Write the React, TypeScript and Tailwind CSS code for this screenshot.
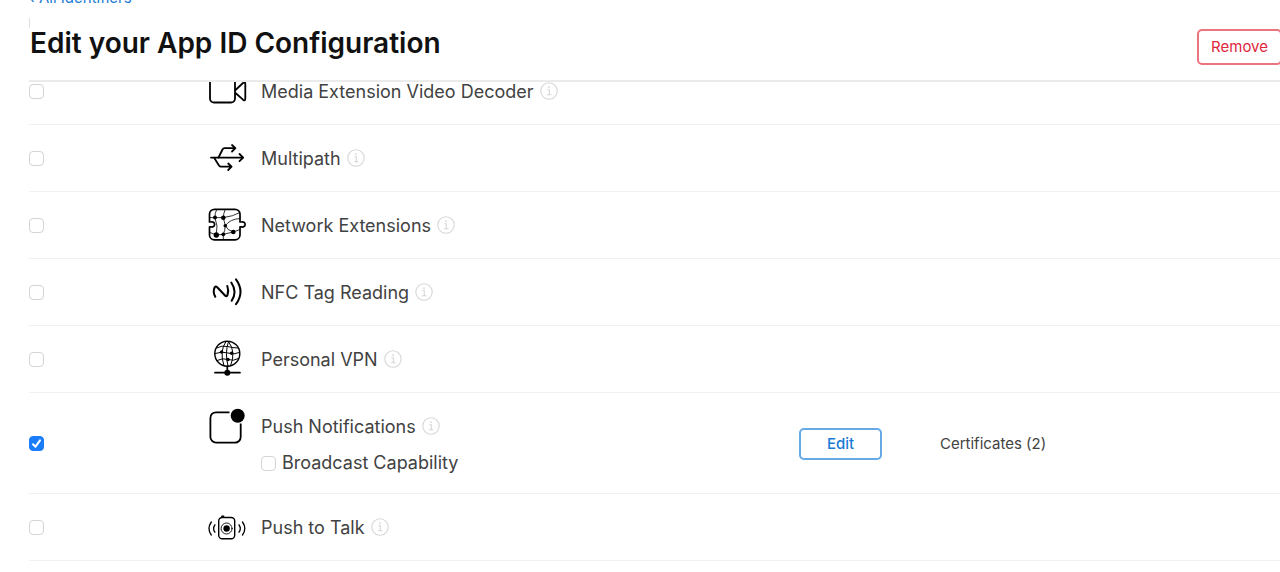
import { useState } from "react";
import type { ReactNode } from "react";

function Icon({ children }: { children: ReactNode }) {
  return (
    <svg
      viewBox="0 0 40 40"
      className="size-10 shrink-0 text-black"
      fill="none"
      stroke="currentColor"
      strokeWidth="1.6"
      strokeLinecap="round"
      strokeLinejoin="round"
      aria-hidden="true"
    >
      {children}
    </svg>
  );
}

const videoIcon = (
  <Icon>
    <g strokeWidth="1.8">
      <rect x="3" y="7" width="25" height="24.5" rx="4" />
      <path d="M28.500 19 36 12Q38.300 10.500 38.300 12.500V27.500Q38.300 30.500 36 28.700L28.500 22" />
    </g>
  </Icon>
);

const multipathIcon = (
  <Icon>
    <g strokeWidth="1.8">
      <path d="M4 19.600H36M32.500 16 36.200 19.600 32.500 23.200" />
      <path d="M11.500 19.500 15.500 11.500Q16.200 10.200 17.500 10.200H28.200M25 7 28.400 10.200 25 13.500" />
      <path d="M7.300 20 12 27.500Q12.800 28.700 14 28.700H24.300M21.200 25.500 24.600 28.700 21.200 32" />
    </g>
  </Icon>
);

const networkIcon = (
  <Icon>
    <path
      strokeWidth="1.7"
      d="M2.500 17V9A5 5 0 0 1 7.500 4.300H28A5 5 0 0 1 33 9V17H34.500A2.600 2.600 0 1 1 34.500 21.800H33V30A5 5 0 0 1 28 34.900H7.500A5 5 0 0 1 2.500 30V21.800H4A2.600 2.600 0 1 0 4 17Z"
    />
    <g strokeWidth=".8">
      <path d="M3 12.600H16.300Q26 11.500 33 7.500M8 12.600Q7.700 8 9.500 5M16.300 12.700Q16.500 8 18 5M16.300 12.700 18.300 20.700Q23 14 33 13.500M18.300 20.700Q20.500 25.500 26.300 27L33 24.500M18.300 20.700Q18 26 16.300 29.300L9.300 30 3 27.500M16.300 29.300 26.300 27M8 12.600Q11.500 21 9.300 30M16.300 29.300V34.500" />
    </g>
    <g fill="currentColor" stroke="none">
      <circle cx="8" cy="12.600" r="2" />
      <circle cx="16.300" cy="12.700" r="2.300" />
      <circle cx="18.300" cy="20.700" r="1.800" />
      <circle cx="26.300" cy="27" r="2.300" />
      <circle cx="16.300" cy="29.300" r="1.900" />
      <circle cx="9.300" cy="30" r="2.700" />
    </g>
  </Icon>
);

const nfcIcon = (
  <Icon>
    <g strokeWidth="2">
      <path d="M8.300 24.800Q5.500 19.700 7.600 15.500Q8.500 13.700 10.200 15.300L18.500 24Q19.700 24.800 20.500 23Q22 18.500 20.300 14" />
      <path d="M24.300 10.500Q30.500 19.700 24.700 28.800M29 7.300Q38 19.700 29 32.200" />
    </g>
  </Icon>
);

const vpnIcon = (
  <Icon>
    <g strokeWidth="1.400">
      <circle cx="20.300" cy="14.700" r="12.500" />
      <path d="M19 2.500Q12 12 17 26.800M21.500 2.500Q17.500 14 21 27M21.500 2.500Q29.500 13 23.500 26.800" strokeWidth="1" />
      <path d="M9.500 9Q15 6 20.500 7.500T31 9M8 14.500Q15 12 21 14T32.500 13.500M10 21.500Q15.500 18.500 21 20.500T31.500 19.500" strokeWidth="1" />
      <path d="M20.300 27.200V33.700M8 33.700H33" strokeWidth="1.700" />
    </g>
    <g fill="currentColor" stroke="none">
      <circle cx="20.300" cy="33.700" r="3" />
      <circle cx="14.600" cy="13" r="1.700" />
      <circle cx="24.600" cy="14.300" r="1.700" />
      <circle cx="21" cy="20.500" r="1.700" />
    </g>
  </Icon>
);

const pushIcon = (
  <Icon>
    <path
      strokeWidth="1.800"
      strokeLinecap="butt"
      d="M22.500 6.300H9A5.600 5.600 0 0 0 3.400 12V31A5.600 5.600 0 0 0 9 36.600H28A5.600 5.600 0 0 0 33.700 31V17.500"
    />
    <circle cx="30.700" cy="9.700" r="7" fill="currentColor" stroke="none" />
  </Icon>
);

const talkIcon = (
  <Icon>
    <rect x="11.700" y="10.500" width="16" height="21.300" rx="3.500" strokeWidth="1.400" />
    <path d="M15 9.300H16.500" strokeWidth="1.800" />
    <circle cx="19.600" cy="21.500" r="5.500" strokeWidth=".9" />
    <circle cx="19.600" cy="21.500" r="3.200" fill="currentColor" stroke="none" />
    <path
      strokeWidth="1.300"
      d="M7.900 17.800Q5.300 21.500 7.900 25.200M4.300 15Q-.3 21.500 4.300 28M32 17.800Q34.600 21.500 32 25.200M35.500 15Q40.100 21.500 35.500 28"
    />
  </Icon>
);

type Capability = {
  id: string;
  name: string;
  icon: ReactNode;
  option?: string;
  certificates?: number;
};

const capabilities: Capability[] = [
  { id: "video-decoder", name: "Media Extension Video Decoder", icon: videoIcon },
  { id: "multipath", name: "Multipath", icon: multipathIcon },
  { id: "network", name: "Network Extensions", icon: networkIcon },
  { id: "nfc", name: "NFC Tag Reading", icon: nfcIcon },
  { id: "vpn", name: "Personal VPN", icon: vpnIcon },
  { id: "push", name: "Push Notifications", icon: pushIcon, option: "Broadcast Capability", certificates: 2 },
  { id: "talk", name: "Push to Talk", icon: talkIcon },
];

function Checkbox({ id, defaultChecked = false }: { id: string; defaultChecked?: boolean }) {
  const [checked, setChecked] = useState(defaultChecked);
  return (
    <span className="grid size-[15px] shrink-0">
      <input
        id={id}
        type="checkbox"
        checked={checked}
        onChange={(event) => setChecked(event.target.checked)}
        className="col-start-1 row-start-1 size-[15px] appearance-none rounded-[4px] border border-[#d4d4d4] bg-white checked:border-[#1a7cf9] checked:bg-[#1a7cf9]"
      />
      {checked && (
        <svg
          viewBox="0 0 15 15"
          className="pointer-events-none col-start-1 row-start-1 size-[15px] text-white"
          fill="none"
          stroke="currentColor"
          strokeWidth="2"
          strokeLinecap="round"
          strokeLinejoin="round"
          aria-hidden="true"
        >
          <path d="M4 8.200 6.500 10.700 11 4.300" />
        </svg>
      )}
    </span>
  );
}

function InfoButton({ name }: { name: string }) {
  return (
    <button type="button" aria-label={`About ${name}`} className="ml-[6px] shrink-0 text-[#d6d6d6]">
      <svg viewBox="0 0 18 18" className="size-[18px]" fill="none" stroke="currentColor" aria-hidden="true">
        <circle cx="9" cy="9" r="8.200" strokeWidth="1.100" />
        <path d="M7.300 7.700H9.300V12.700M7 12.800H11.500" strokeWidth="1.100" />
        <circle cx="9" cy="5.200" r=".9" fill="currentColor" stroke="none" />
      </svg>
    </button>
  );
}

export default function App() {
  return (
    <div className="overflow-hidden bg-white pl-[29px] font-[Inter,'Liberation_Sans',sans-serif] text-[#424242]">
      <header className="relative z-10 -mt-3 border-b-2 border-[#ebebeb] bg-white">
        <a href="#identifiers" className="flex h-5 w-fit items-center text-[15px] leading-5 text-[#1a7ad4]">
          ‹ All Identifiers
        </a>
        <div className="mt-[10px] h-[10px] border-l border-[#e0e0e0]" />
        <div className="flex h-[52px] items-start justify-between pl-px">
          <h1 className="-mt-[3px] text-[28px] leading-9 font-semibold text-[#111]">Edit your App ID Configuration</h1>
          <button
            type="button"
            className="-mr-[2px] mt-px h-9 rounded-[5px] border-2 border-[#ec7380] px-3 text-[15px] leading-5 text-[#e0263c]"
          >
            Remove
          </button>
        </div>
      </header>

      <table className="-mt-6 w-full table-fixed border-separate border-spacing-0">
        <colgroup>
          <col className="w-[178px]" />
          <col className="w-[592px]" />
          <col className="w-[141px]" />
          <col />
        </colgroup>
        <tbody>
          {capabilities.map(({ id, name, icon, option, certificates }) => (
            <tr key={id} className="*:border-b *:border-[#f0f0f0] *:p-0 *:align-middle">
              <td>
                <Checkbox id={id} defaultChecked={certificates !== undefined} />
              </td>
              <td>
                <div className="py-[13px]">
                  <div className="flex h-10 items-center">
                    {icon}
                    <label htmlFor={id} className="ml-[14px] pt-px text-[18px] leading-7">
                      {name}
                    </label>
                    <InfoButton name={name} />
                  </div>
                  {option && (
                    <div className="flex h-[34px] items-center pl-[54px]">
                      <Checkbox id={`${id}-option`} />
                      <label htmlFor={`${id}-option`} className="ml-[6px] text-[18px] leading-7">
                        {option}
                      </label>
                    </div>
                  )}
                </div>
              </td>
              <td>
                {certificates !== undefined && (
                  <div className="pt-[2px]">
                    <button
                      type="button"
                      className="block h-8 w-[83px] rounded-[5px] border-2 border-[#67a9e5] text-[15px] leading-5 font-medium text-[#1a7ad4]"
                    >
                      Edit
                    </button>
                  </div>
                )}
              </td>
              <td className="text-[15px] leading-5">
                {certificates !== undefined && <div className="pt-[2px]">Certificates ({certificates})</div>}
              </td>
            </tr>
          ))}
        </tbody>
      </table>
    </div>
  );
}
